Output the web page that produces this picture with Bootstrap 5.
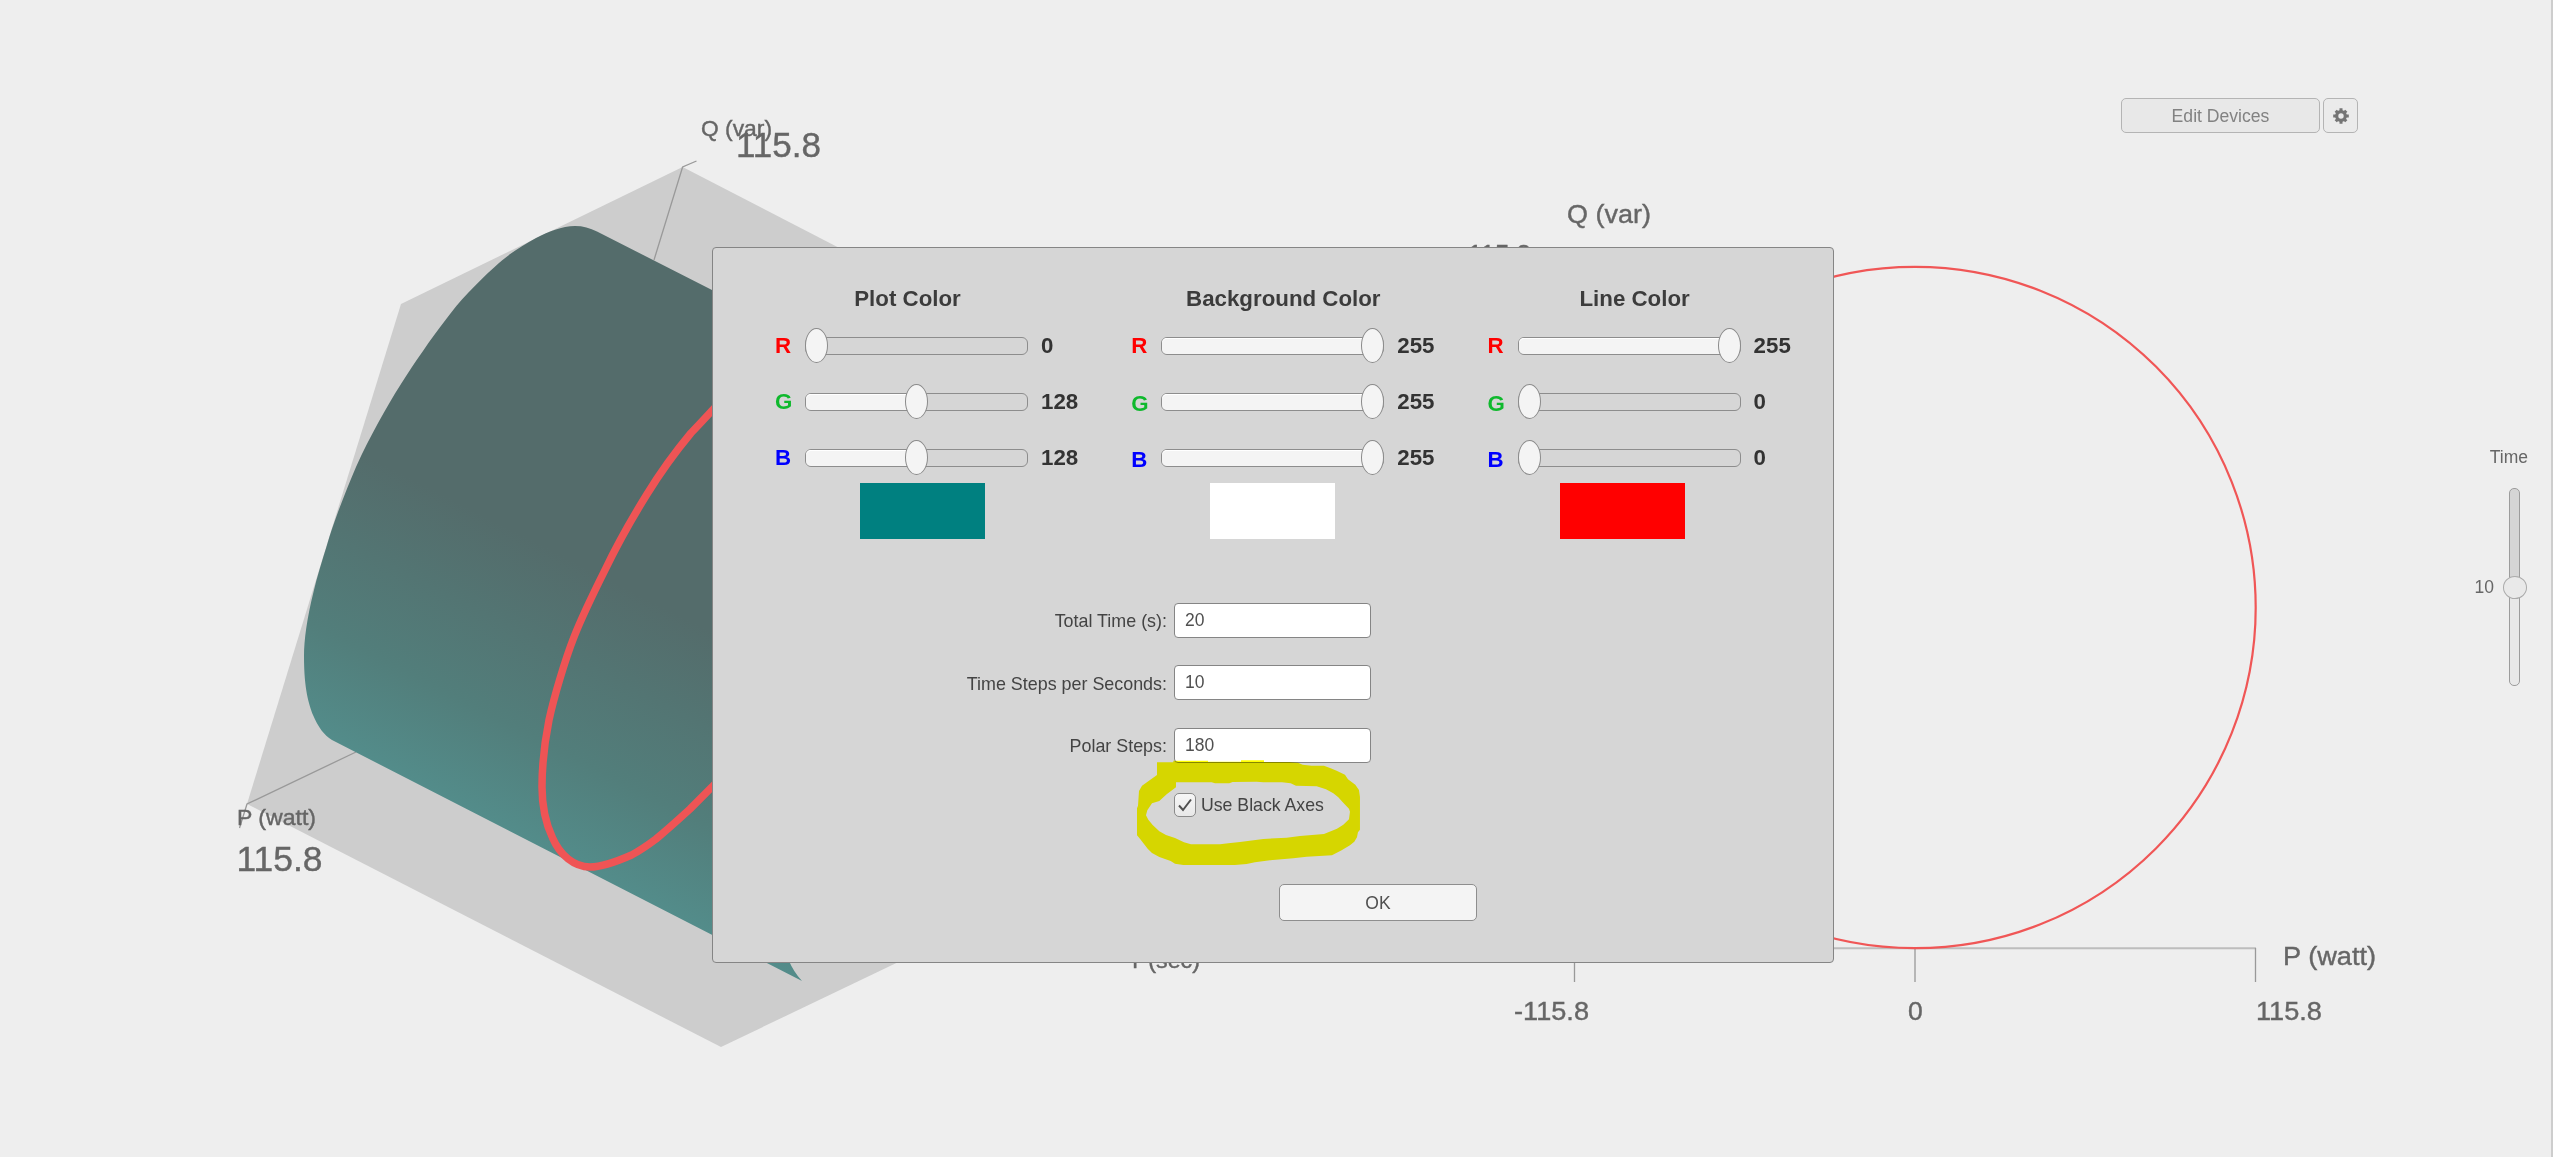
<!DOCTYPE html>
<html lang="en">
<head>
<meta charset="utf-8">
<title>Power Plot Settings</title>
<link href="https://cdn.jsdelivr.net/npm/bootstrap@5.3.0/dist/css/bootstrap.min.css" rel="stylesheet">
<style>
  body { background: #eee; font-family: "Liberation Sans", Arial, sans-serif; font-size: 17.5px; color: #444; line-height: 1.2; }
  .viewer { width: 2553px; height: 1157px; border-right: 2px solid #cdcdcd; }
  .scene { left: 0; top: 0; width: 2551px; height: 1157px; }
  .scene text { fill: #666; stroke: #666; stroke-width: .4px; }
  .topbar { padding: 98px 193px 0 0; gap: 3px; }
  .btn-dim { height: 35px; border: 1.5px solid #b4b4b4; border-radius: 5px; background: #e8e8e8; color: #828282; font-size: 17.6px; padding: 0; line-height: 32px; }
  .btn-edit { width: 199px; }
  .btn-gear { width: 35px; background: #ebebeb; }
  .timebox { padding: 314px 23px 0 0; width: 100px; color: #666; }
  .time-body { margin-top: 20px; height: 198px; gap: 15px; padding-right: 8px; }
  .vtrack { width: 11px; height: 198px; border: 1px solid #9c9c9c; border-radius: 5px; background: linear-gradient(#d5d5d5 50%, #e8e8e8 50%); }
  .vthumb { left: -7px; top: 87px; width: 24px; height: 23px; border: 1px solid #aaa; border-radius: 50%; background: #e9e9e9; }

  .settings { left: 712px; top: 247px; width: 1122px; height: 716px; background: #d6d6d6; border: 1px solid #858585; border-radius: 4px; padding-top: 32px; }
  .channels { padding-left: 62px; }
  .channel-col { width: 356.3px; }
  .channel-title { height: 38px; line-height: 38px; font-size: 22.3px; font-weight: 700; color: #3c3c3c; white-space: nowrap; }
  .ch-row { height: 56.25px; font-size: 22.3px; font-weight: 700; color: #333; }
  .ch-name { width: 30px; }
  .drop { padding-top: 4px; }
  .r { color: #f00; } .g { color: #0fb92d; } .b { color: #00f; }
  .track { width: 223px; height: 18px; border: 1px solid #8d8d8d; border-radius: 6px; margin: -1px 13px 0 0; }
  .fill { height: 16px; background: #f4f4f4; border-radius: 5px 0 0 5px; box-shadow: inset 0 1px 0 #fff; }
  .thumb { top: -10px; width: 23px; height: 35px; border: 1.5px solid #8a8a8a; border-radius: 50%; background: #f4f4f4; }
  .swatches { margin-top: -4px; padding-left: 147px; gap: 225px; }
  .swatch { width: 125px; height: 56px; }

  .fields { margin-top: 64px; gap: 28px; width: 658px; }
  .field { height: 34.5px; gap: 7px; }
  .field label { padding-top: 4px; font-size: 17.9px; }
  .field .form-control { width: 197px; height: 35px; border: 1px solid #858585; border-radius: 4px; padding: 0 0 0 10px; font-size: 17.5px; color: #505050; background: #fff; }
  .axes-row { margin: 31px 0 0 461px; height: 24px; gap: 5px; font-size: 17.7px; }
  .tick { width: 22px; height: 24px; border: 1.5px solid #8a8a8a; border-radius: 5px; background: linear-gradient(#f6f6f6, #e8e8e8); }
  .btn-ok { margin: 67px 0 0 566px; width: 198px; height: 37px; border: 1.5px solid #8e8e8e; border-radius: 5px; background: #f4f4f4; color: #505050; font-size: 17.5px; padding: 0; line-height: 34px; }
  .marker { left: 423px; top: 511px; width: 225.3px; height: 108px; mix-blend-mode: multiply; pointer-events: none; }
</style>
<script src="https://cdn.jsdelivr.net/npm/bootstrap@5.3.0/dist/js/bootstrap.bundle.min.js"></script>
</head>
<body class="overflow-hidden">
<main class="viewer position-relative">

  <svg class="scene position-absolute" viewBox="0 0 2551 1157">
    <defs>
      <linearGradient id="shade" gradientUnits="userSpaceOnUse" x1="-109" y1="213" x2="-231" y2="452">
        <stop offset="0" stop-color="#546c6b"/><stop offset=".65" stop-color="#527e7b"/><stop offset="1" stop-color="#538c8a"/>
      </linearGradient>
    </defs>
    <path d="M401 304 682.600 167 1180 424 1180 827 721 1047 247 804Z" fill="#cdcdcd"/>
    <path d="M654 260 682.600 167 696.500 161M356 752 247 804 239.500 828" fill="none" stroke="#999" stroke-width="1.300"/>
    <path d="M712 290 597 231.500C590 228 583 226 575 226C562 226 548 232 536 238C522 246 508 254 494.600 267C485 275 477 284 468 293C460 301 453 310 445.500 320C438 330 430 340 423 351C415 362 408 373 401 384C393 396 386 409 378.600 422C371 436 363 451 356 467C350 481 344 496 338 512C334 523 330 534 327 545C322 561 317 577 313.500 592C307 618 304 640 304 656C304 690 309 704 313 715C318 727 324 735 332 740L802 981C796 974 792 968 788.600 960L830 350Z" fill="url(#shade)"/>
    <path d="M760 358C738 382 715 408 691 433C676 451 660 473 646.500 495C631 520 617 545 605 570C593 594 583 614 574 637C565 660 554 697 549 720C545 740 542 765 542 787C542 805 546 824 552.600 838C560 855 574 867 590 867C603 867 618 861 631.600 855C641 850 648 845 656 839C668 829 678 820 690 809L712 787 760 735" fill="none" stroke="#ef5455" stroke-width="7.500"/>

    <path d="M1574 948.300H2256" stroke="#bdbdbd" stroke-width="2"/>
    <path d="M1574.500 948V982M1915 948V982M2255.500 948V982" stroke="#999" stroke-width="1.300"/>
    <circle cx="1915" cy="607.500" r="340.700" fill="none" stroke="#f05656" stroke-width="2.200"/>

    <g font-size="22">
      <text x="701" y="136" textLength="71" lengthAdjust="spacingAndGlyphs">Q (var)</text>
      <text x="237" y="825" textLength="79" lengthAdjust="spacingAndGlyphs">P (watt)</text>
      <text x="1128" y="968" textLength="72" lengthAdjust="spacingAndGlyphs">T (sec)</text>
    </g>
    <g font-size="34.500">
      <text x="736" y="157" textLength="85" lengthAdjust="spacingAndGlyphs">115.8</text>
      <text x="236.500" y="871" textLength="86" lengthAdjust="spacingAndGlyphs">115.8</text>
    </g>
    <g font-size="26.500">
      <text x="1567" y="223" textLength="84" lengthAdjust="spacingAndGlyphs">Q (var)</text>
      <text x="1468" y="263" textLength="63" lengthAdjust="spacingAndGlyphs">115.8</text>
      <text x="1514" y="1020" textLength="75" lengthAdjust="spacingAndGlyphs">-115.8</text>
      <text x="1908" y="1020">0</text>
      <text x="2256" y="1020" textLength="66" lengthAdjust="spacingAndGlyphs">115.8</text>
      <text x="2283" y="965" textLength="93" lengthAdjust="spacingAndGlyphs">P (watt)</text>
    </g>
  </svg>

  <header class="topbar d-flex justify-content-end position-relative">
    <button class="btn btn-dim btn-edit">Edit Devices</button>
    <button class="btn btn-dim btn-gear d-flex align-items-center justify-content-center" aria-label="Settings">
      <svg width="16" height="16" viewBox="-8 -8 16 16">
        <circle r="4.300" fill="none" stroke="#757575" stroke-width="3.200"/>
        <g stroke="#757575" stroke-width="3"><path d="M0-7.800V-5M0 5V7.800M-7.800 0H-5M5 0H7.800M-5.300-5.300-3.600-3.600M5.300-5.300 3.600-3.600M-5.300 5.300-3.600 3.600M5.300 5.300 3.600 3.600"/></g>
      </svg>
    </button>
  </header>

  <aside class="timebox ms-auto position-relative">
    <div class="text-end">Time</div>
    <div class="time-body d-flex align-items-center justify-content-end">
      <span>10</span>
      <div class="vtrack position-relative"><div class="vthumb position-absolute"></div></div>
    </div>
  </aside>

  <section class="settings position-absolute">
    <div class="channels d-flex">
      <div class="channel-col flex-shrink-0">
        <div class="channel-title text-center" style="width:265px">Plot Color</div>
        <div class="ch-row d-flex align-items-center"><span class="ch-name r">R</span><div class="track position-relative"><div class="thumb position-absolute" style="left:-1px"></div></div>0</div>
        <div class="ch-row d-flex align-items-center"><span class="ch-name g">G</span><div class="track position-relative"><div class="fill" style="width:111px"></div><div class="thumb position-absolute" style="left:99px"></div></div>128</div>
        <div class="ch-row d-flex align-items-center"><span class="ch-name b">B</span><div class="track position-relative"><div class="fill" style="width:111px"></div><div class="thumb position-absolute" style="left:99px"></div></div>128</div>
      </div>
      <div class="channel-col flex-shrink-0">
        <div class="channel-title text-center" style="width:304px">Background Color</div>
        <div class="ch-row d-flex align-items-center"><span class="ch-name r">R</span><div class="track position-relative"><div class="fill" style="width:210px"></div><div class="thumb position-absolute" style="left:199px"></div></div>255</div>
        <div class="ch-row d-flex align-items-center"><span class="ch-name g drop">G</span><div class="track position-relative"><div class="fill" style="width:210px"></div><div class="thumb position-absolute" style="left:199px"></div></div>255</div>
        <div class="ch-row d-flex align-items-center"><span class="ch-name b drop">B</span><div class="track position-relative"><div class="fill" style="width:210px"></div><div class="thumb position-absolute" style="left:199px"></div></div>255</div>
      </div>
      <div class="channel-col">
        <div class="channel-title text-center" style="width:294px">Line Color</div>
        <div class="ch-row d-flex align-items-center"><span class="ch-name r">R</span><div class="track position-relative"><div class="fill" style="width:210px"></div><div class="thumb position-absolute" style="left:199px"></div></div>255</div>
        <div class="ch-row d-flex align-items-center"><span class="ch-name g drop">G</span><div class="track position-relative"><div class="thumb position-absolute" style="left:-1px"></div></div>0</div>
        <div class="ch-row d-flex align-items-center"><span class="ch-name b drop">B</span><div class="track position-relative"><div class="thumb position-absolute" style="left:-1px"></div></div>0</div>
      </div>
    </div>
    <div class="swatches d-flex">
      <div class="swatch" style="background:#008080"></div>
      <div class="swatch" style="background:#fff"></div>
      <div class="swatch" style="background:#f00"></div>
    </div>

    <div class="fields d-flex flex-column">
      <div class="field d-flex align-items-center justify-content-end"><label for="total">Total Time (s):</label><input id="total" class="form-control" value="20"></div>
      <div class="field d-flex align-items-center justify-content-end"><label for="steps">Time Steps per Seconds:</label><input id="steps" class="form-control" value="10"></div>
      <div class="field d-flex align-items-center justify-content-end"><label for="polar">Polar Steps:</label><input id="polar" class="form-control" value="180"></div>
    </div>
    <div class="axes-row d-flex align-items-center">
      <span class="tick d-flex align-items-center justify-content-center"><svg width="14" height="14" viewBox="0 0 14 14"><path d="M1 7.500 5 12 13 1.500" fill="none" stroke="#505050" stroke-width="2"/></svg></span>
      <span>Use Black Axes</span>
    </div>
    <button class="btn btn-ok">OK</button>

    <svg class="marker position-absolute" viewBox="48 56 676 324">
      <path fill="#ff0" fill-rule="evenodd" d="M111 66H160V61H264V64H363V60H432V65H508L534 67 548 73 575 76H612L632 84 650 91 675 103 684 117 706 133 717 149 720 170V268L714 276 711 291 703 304 690 315 665 330 636 345 560 349 520 354 450 360 405 366 380 371 345 374H190L165 370 152 362 118 350 96 338 83 325 72 311 61 297 51 285V204L54 196 57 152 66 136 90 119 111 104ZM168 126H275L285 129H328L338 125 410 124 430 126H486L512 129 528 136 590 138 618 147 640 159 655 171 667 184 687 205 690 214 687 237 670 253 651 265 612 281 540 287 500 292 430 296 360 305 325 309 300 312H213L192 306 165 293 138 284 118 273 98 254 85 238 78 225 82 210 96 189 118 182 140 162 168 141Z"/>
    </svg>
  </section>
</main>
</body>
</html>
